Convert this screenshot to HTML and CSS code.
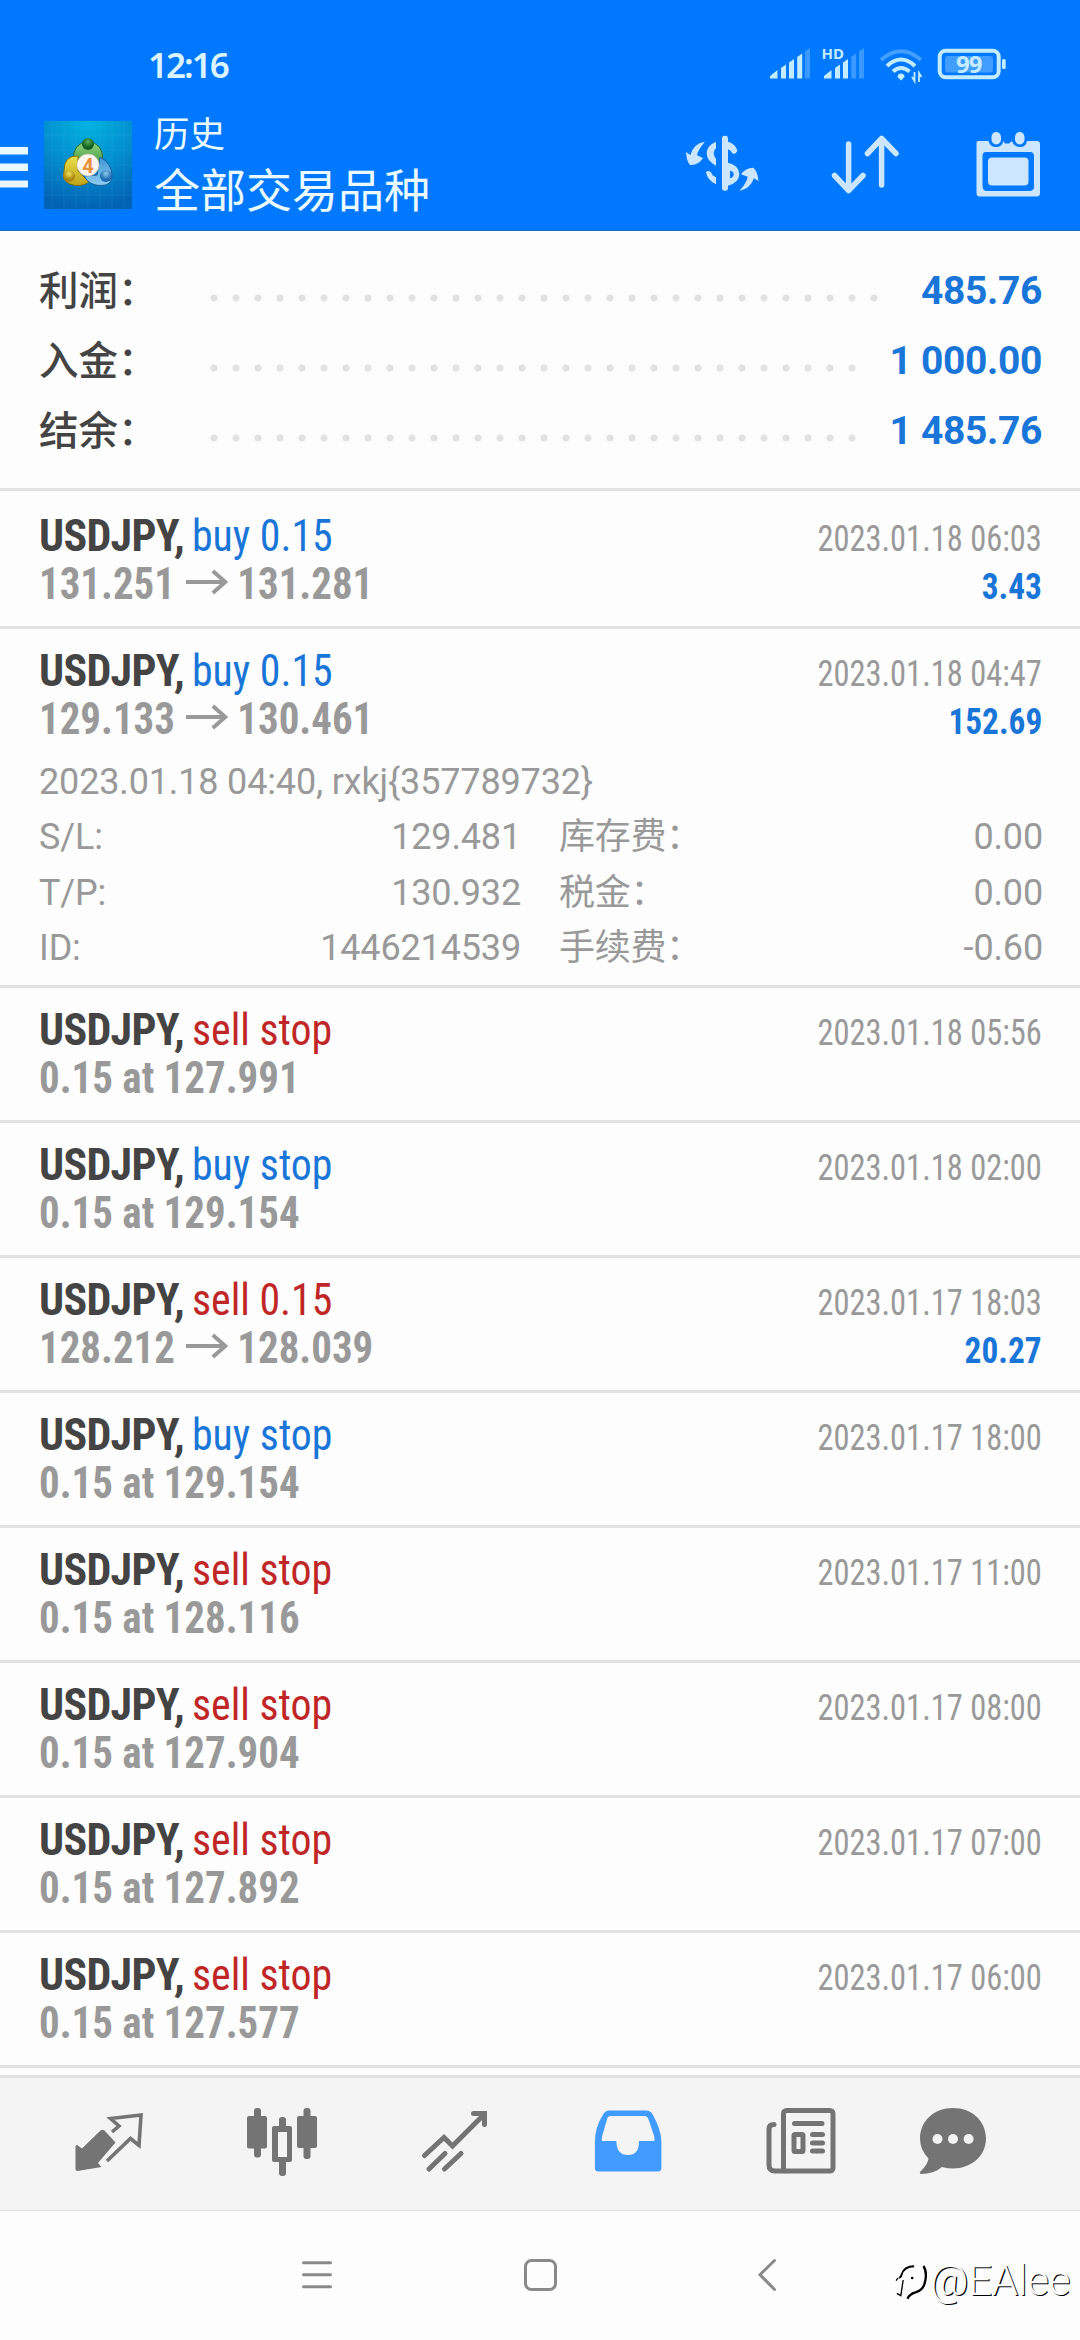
FILE: index.html
```html
<!DOCTYPE html>
<html lang="zh-CN">
<head>
<meta charset="utf-8">
<title>历史</title>
<link rel="stylesheet" href="styles.css">
</head>
<body>
<svg width="0" height="0" class="defs">
  <symbol id="arrow" viewBox="0 0 44 26" preserveAspectRatio="none"><path d="M1 13H41M28 2L40.500 13L28 24" fill="none" stroke="#999" stroke-width="4"/></symbol>
</svg>
<header class="header">
  <div class="status">
    <span class="clock">12:16</span>
    <svg class="status-icons" viewBox="766 40 244 48" width="244" height="48" fill="#c4ecff">
      <path d="M770 78.500V76L777.500 70V78.500ZM781 78.500V68L786 64.500V78.500ZM789 78.500V62.500L794 59V78.500ZM797.200 78.500V57L802.200 53.500V78.500Z"/>
      <path d="M805 78.500V51.500L810 48V78.500Z" opacity=".3"/>
      <path d="M824 78.500V76L831.500 70V78.500ZM835 78.500V68L840 64.500V78.500ZM843 78.500V62.500L848 59V78.500Z"/>
      <path d="M851.200 78.500V57L856.200 53.500V78.500ZM859 78.500V51.500L864 48V78.500Z" opacity=".3"/>
      <text x="821.500" y="59" class="hd">HD</text>
      <g fill="none" stroke="#c4ecff" stroke-width="4">
        <path d="M881 60Q901 42.500 921 60" opacity=".35"/>
        <path d="M887 66Q901 53 915 66"/>
        <path d="M893 71.500Q901 64.500 909.500 71.500"/>
        <rect x="939.700" y="50.700" width="59" height="26.600" rx="6"/>
      </g>
      <path d="M901 80.500L897.500 77Q897.500 73.500 901 73.500T904.500 77Z"/>
      <path d="M914.500 72V81L912 77M919 82V73L921.500 77" fill="none" stroke="#c4ecff" stroke-width="1.800"/>
      <rect x="945" y="56" width="48" height="16.500" rx="3" opacity=".33"/>
      <rect x="1002" y="59" width="3.700" height="10" rx="1.500"/>
      <text x="956" y="73" class="charge">99</text>
    </svg>
  </div>
  <div class="toolbar">
    <svg class="menu" viewBox="0 0 28 41" width="28" height="41" fill="#e8f8ff"><path d="M0 0h28v7.500H0ZM0 16.500h28v7.500H0ZM0 33.500h28v7H0Z"/></svg>
    <svg class="logo" viewBox="0 0 88 88" width="88" height="88">
      <defs>
        <radialGradient id="sky" cx=".5" cy="0" r="1"><stop offset="0" stop-color="#02b4e0"/><stop offset=".5" stop-color="#0390d0"/><stop offset="1" stop-color="#0262b4"/></radialGradient>
        <linearGradient id="gr" x2="0" y2="1"><stop offset="0" stop-color="#8fd37a"/><stop offset="1" stop-color="#2d8a38"/></linearGradient>
        <linearGradient id="ye" x2="0" y2="1"><stop offset="0" stop-color="#e8e04a"/><stop offset="1" stop-color="#bfa21a"/></linearGradient>
        <linearGradient id="bl" x2="0" y2="1"><stop offset="0" stop-color="#3d97d8"/><stop offset="1" stop-color="#8fcdf0"/></linearGradient>
        <radialGradient id="gb" cy=".3"><stop offset="0" stop-color="#5fae5a"/><stop offset="1" stop-color="#12601f"/></radialGradient>
        <radialGradient id="yb" cy=".3"><stop offset="0" stop-color="#f0e458"/><stop offset="1" stop-color="#a8860e"/></radialGradient>
        <radialGradient id="bb" cy=".3"><stop offset="0" stop-color="#8ccaf0"/><stop offset="1" stop-color="#1b6cb0"/></radialGradient>
      </defs>
      <rect width="88" height="88" fill="url(#sky)"/>
      <path d="M8 0V88M20 0V88M32 0V88M44 0V88M56 0V88M68 0V88M80 0V88M0 14H88M0 29H88M0 44H88M0 59H88M0 74H88" stroke="#4cc4ee" stroke-width=".7" opacity=".18"/>
      <path d="M29 40Q29 21 44 21T59 40L54 50H34Z" fill="url(#gr)" stroke="#226d35" stroke-width="1"/>
      <path d="M34 35Q20 34 20 50Q18 60 26 63Q36 67 45 61L34 50Z" fill="url(#ye)" stroke="#80700f" stroke-width="1"/>
      <path d="M56 36Q68 42 68 55Q68 64 58 64.500Q45 65 40 55L53 54Z" fill="url(#bl)" stroke="#195c9a" stroke-width="1"/>
      <circle cx="44" cy="23" r="6" fill="url(#gb)"/>
      <circle cx="25" cy="55" r="6" fill="url(#yb)"/>
      <circle cx="62" cy="55" r="6" fill="url(#bb)"/>
      <circle cx="44" cy="44" r="11" fill="#fbf5ef" stroke="#cfc3ae" stroke-width=".6"/>
      <text x="44" y="51.500" class="four">4</text>
    </svg>
    <div class="titles"><div class="title">历史</div><div class="subtitle">全部交易品种</div></div>
    <div class="actions">
      <svg class="dollar" viewBox="0 0 270 225" width="90" height="75" fill="#cce6ff">
        <rect x="126" y="32" width="18" height="165" rx="8"/>
        <path d="M108 50V70Q101 75 101 85Q101 94 108 101V122Q80 108 80 85Q80 62 108 50ZM78 142Q83 134 93 142Q96 152 108 157V178Q82 166 78 142ZM144 50Q166 56 172 76Q170 88 158 86Q154 77 144 73ZM144 113Q178 121 178 148Q178 173 144 182ZM150 137V160Q161 157 161 148T150 137Z" fill-rule="evenodd"/>
        <path d="M75 50Q53 75 51 91L69 99Q55 122 30 120Q19 107 18 81L31 90Q42 54 75 50Z"/>
        <path d="M178 198Q201 172 203 155L183 148Q198 127 220 128Q234 140 235 168L222 160Q210 192 178 198Z"/>
      </svg>
      <svg class="sort" viewBox="828 130 74 70" width="74" height="70" fill="none" stroke="#cce6ff" stroke-width="5.500" stroke-linecap="round" stroke-linejoin="round"><path d="M848.600 144V190M834.500 175.500L848.600 190.500L863 175.500M881.600 185V139M867.500 153.500L881.600 138.500L896 153.500"/></svg>
      <svg class="calendar" viewBox="974 130 68 70" width="68" height="70" fill="#cce6ff">
        <path fill-rule="evenodd" d="M978 141H988.500Q990 147 996 147T1003.500 141L1005 143.500H1009L1012 141Q1014 147 1020 147T1027 141H1037Q1040 141 1040 144V193Q1040 196.500 1037 196.500H979.500Q976.500 196.500 976.500 193V143Q976.500 141 978 141ZM986 152Q982.500 152 982.500 156V186Q982.500 191 987 191H1029Q1034 191 1034 187V156Q1034 152 1030 152Z"/>
        <rect x="988" y="157.500" width="40.500" height="28" rx="4"/><rect x="991.500" y="132" width="9.500" height="12.500" rx="4.700"/><rect x="1015" y="132" width="9.500" height="12.500" rx="4.700"/>
      </svg>
    </div>
  </div>
</header>
<main class="content">
  <section class="summary">
    <div class="sum-row"><span class="sum-label">利润：</span><span class="dots"></span><span class="sum-value">485.76</span></div>
    <div class="sum-row"><span class="sum-label">入金：</span><span class="dots"></span><span class="sum-value">1 000.00</span></div>
    <div class="sum-row"><span class="sum-label">结余：</span><span class="dots"></span><span class="sum-value">1 485.76</span></div>
  </section>
  <article class="deal">
    <div class="line"><div class="name"><b>USDJPY,</b> <span class="buy">buy 0.15</span></div><time>2023.01.18 06:03</time></div>
    <div class="line"><div class="price">131.251<svg class="arrow"><use href="#arrow"/></svg>131.281</div><div class="profit">3.43</div></div>
  </article>
  <article class="deal">
    <div class="line"><div class="name"><b>USDJPY,</b> <span class="buy">buy 0.15</span></div><time>2023.01.18 04:47</time></div>
    <div class="line"><div class="price">129.133<svg class="arrow"><use href="#arrow"/></svg>130.461</div><div class="profit">152.69</div></div>
    <div class="details">
      <div class="note">2023.01.18 04:40, rxkj{357789732}</div>
      <span>S/L:</span><span class="num">129.481</span><span class="cjk">库存费：</span><span class="num">0.00</span>
      <span>T/P:</span><span class="num">130.932</span><span class="cjk">税金：</span><span class="num">0.00</span>
      <span>ID:</span><span class="num">1446214539</span><span class="cjk">手续费：</span><span class="num">-0.60</span>
    </div>
  </article>
  <article class="deal">
    <div class="line"><div class="name"><b>USDJPY,</b> <span class="sell">sell stop</span></div><time>2023.01.18 05:56</time></div>
    <div class="line"><div class="price">0.15 at 127.991</div></div>
  </article>
  <article class="deal">
    <div class="line"><div class="name"><b>USDJPY,</b> <span class="buy">buy stop</span></div><time>2023.01.18 02:00</time></div>
    <div class="line"><div class="price">0.15 at 129.154</div></div>
  </article>
  <article class="deal">
    <div class="line"><div class="name"><b>USDJPY,</b> <span class="sell">sell 0.15</span></div><time>2023.01.17 18:03</time></div>
    <div class="line"><div class="price">128.212<svg class="arrow"><use href="#arrow"/></svg>128.039</div><div class="profit">20.27</div></div>
  </article>
  <article class="deal">
    <div class="line"><div class="name"><b>USDJPY,</b> <span class="buy">buy stop</span></div><time>2023.01.17 18:00</time></div>
    <div class="line"><div class="price">0.15 at 129.154</div></div>
  </article>
  <article class="deal">
    <div class="line"><div class="name"><b>USDJPY,</b> <span class="sell">sell stop</span></div><time>2023.01.17 11:00</time></div>
    <div class="line"><div class="price">0.15 at 128.116</div></div>
  </article>
  <article class="deal">
    <div class="line"><div class="name"><b>USDJPY,</b> <span class="sell">sell stop</span></div><time>2023.01.17 08:00</time></div>
    <div class="line"><div class="price">0.15 at 127.904</div></div>
  </article>
  <article class="deal">
    <div class="line"><div class="name"><b>USDJPY,</b> <span class="sell">sell stop</span></div><time>2023.01.17 07:00</time></div>
    <div class="line"><div class="price">0.15 at 127.892</div></div>
  </article>
  <article class="deal">
    <div class="line"><div class="name"><b>USDJPY,</b> <span class="sell">sell stop</span></div><time>2023.01.17 06:00</time></div>
    <div class="line"><div class="price">0.15 at 127.577</div></div>
  </article>
</main>
<nav class="tabs">
  <svg viewBox="68.500 2104 80 80" fill="#747474">
    <path d="M75 2146.500Q76 2144 78 2146L81.500 2148.500L100 2130.500Q102 2129 104 2130.500L115 2142.500L97.500 2163L101 2167L77 2171Q75 2171 75 2169Z"/>
    <path d="M111.500 2132L118.500 2126L110 2118.500L140.500 2115L138.500 2145.500L130 2138.500L106.500 2161" fill="none" stroke="#747474" stroke-width="3.600"/>
  </svg>
  <svg viewBox="241 2104 80 80" fill="#747474">
    <rect x="246" y="2116" width="20" height="32.500" rx="2"/><rect x="253" y="2108" width="7" height="49.500" rx="3"/>
    <rect x="296" y="2116" width="20" height="32" rx="2"/><rect x="302.500" y="2108" width="7" height="51" rx="3"/>
    <rect x="278" y="2117" width="7" height="13" rx="3"/><rect x="278" y="2158" width="7" height="18" rx="3"/>
    <path fill-rule="evenodd" d="M273 2126H289Q291 2126 291 2128V2160Q291 2162 289 2162H273Q271 2162 271 2160V2128Q271 2126 273 2126ZM277 2132V2157H286V2132Z"/>
  </svg>
  <svg viewBox="414.500 2104 80 80" fill="none" stroke="#747474" stroke-width="5" stroke-linecap="round"><path d="M424 2155.500L443.500 2137.500L452 2146L484 2114M473 2113.500H484V2124.500M428.500 2169L444.500 2153.500M444 2169L460.500 2153.500"/></svg>
  <svg viewBox="587.600 2104 80 80" fill="#429bff">
    <path fill-rule="evenodd" d="M609 2110.500H646Q650 2110.500 652 2114Q661 2130 661 2142V2168Q661 2171.500 657.500 2171.500H598Q594.500 2171.500 594.500 2168V2142Q594.500 2127 603 2114Q605 2110.500 609 2110.500ZM610 2116Q608 2116 607 2118L601.500 2137V2141H616Q616 2155 627.500 2155T638.500 2141H654V2137L648 2119Q647 2116 644 2116Z"/>
  </svg>
  <svg viewBox="761 2104 80 80" fill="none" stroke="#747474" stroke-width="5" stroke-linecap="round">
    <rect x="783.500" y="2110.500" width="49.500" height="60.500" rx="3"/><path d="M774 2124.500Q769 2124.500 769 2129V2165Q769 2171 775 2171H785" />
    <path d="M794.500 2123.500H822M812.500 2134.500H822.500M812.500 2143H822.500M812.500 2151H822.500"/><rect x="794" y="2134.500" width="9" height="17" rx="1"/>
  </svg>
  <svg viewBox="913 2104 80 80" fill="#747474">
    <path fill-rule="evenodd" d="M953 2108C972 2108 986 2121 986 2138.500S971 2168.500 953 2168.500Q948 2168.500 942 2167Q934 2174 921 2174Q918.500 2173 921 2171Q928 2164 928.500 2158.500Q920 2150 920 2138.500C920 2121 934 2108 953 2108Z"/>
    <circle cx="937.500" cy="2139" r="5" fill="#f4f4f4"/><circle cx="953" cy="2139" r="5" fill="#f4f4f4"/><circle cx="968.600" cy="2139" r="5" fill="#f4f4f4"/>
  </svg>
</nav>
<footer class="sysnav">
  <svg viewBox="297 2255 40 40" stroke="#8a8a8a" stroke-width="3" stroke-linecap="round"><path d="M303.500 2262.700H330.500M303.500 2274.700H330.500M303.500 2286.700H330.500"/></svg>
  <svg viewBox="520 2255 40 40" fill="none" stroke="#8a8a8a" stroke-width="3"><rect x="523.500" y="2260.500" width="30" height="29" rx="6"/></svg>
  <svg viewBox="747 2255 40 40" fill="none" stroke="#8a8a8a" stroke-width="3" stroke-linecap="round"><path d="M774.500 2260.500L760 2274.700L774.500 2289.500"/></svg>
</footer>
<div class="watermark">
  <svg viewBox="0 0 110 120" width="37" height="40" fill="none" stroke="#000" stroke-width="6">
    <path d="M26 52Q31 54 34 44Q42 19 72 19"/><path d="M18 62L23 54M39 60L32 107L20 100" stroke-width="4"/>
    <path d="M100 18Q112 36 104 68Q99 90 76 97Q58 102 52 116" stroke-width="7"/><circle cx="66" cy="54" r="4" fill="#000" stroke="none"/>
  </svg>
  <span>@EAlee</span>
</div>
</body>
</html>
```
FILE: styles.css
```css
* { box-sizing: border-box; }
body {
  margin: 0;
  width: 1080px;
  height: 2340px;
  display: flex;
  flex-direction: column;
  position: relative;
  overflow: hidden;
  background: #fdfdfd;
  color: #444;
  font-family: Roboto, "Noto Sans CJK SC", sans-serif;
}
svg { display: block; flex: none; }
.defs { position: absolute; }

.header { height: 231px; background: #0078ff; border-bottom: 1px solid #1c6cc4; }
.status { height: 88px; padding: 40px 70px 0 148px; display: flex; justify-content: space-between; }
.clock {
  font: 600 35px/49px "Noto Sans", sans-serif;
  letter-spacing: -2px;
  color: #dcf4ff;
}
.hd { font: 700 15px "Noto Sans", sans-serif; }
.charge { font: 700 24px "Noto Sans", sans-serif; letter-spacing: -1px; }
.toolbar { display: flex; height: 142px; }
.menu { margin-top: 58.500px; }
.logo { margin: 33px 0 0 16px; }
.four { font: 700 20px Roboto, sans-serif; fill: #e8903c; text-anchor: middle; }
.titles { margin: 18px 0 0 22px; color: #eafaff; font-family: "Noto Sans CJK SC", sans-serif; }
.title { font-size: 35.500px; line-height: 52px; }
.subtitle { font-size: 46px; line-height: 58px; }
.actions { display: flex; margin-left: auto; padding-right: 38px; }
.dollar { margin: 37px 58px 0 0; }
.sort { margin: 42px 72px 0 0; }
.calendar { margin-top: 42px; }

.content { height: 1844px; flex: none; }
.summary { height: 260px; padding: 24px 38px 0 39px; border-bottom: 3px solid #e2e2e2; }
.sum-row { height: 70px; display: flex; align-items: center; }
.sum-label { width: 163.500px; height: 70px; font: 500 39.500px/66px "Noto Sans CJK SC", sans-serif; }
.dots {
  flex: 1;
  height: 8px;
  margin: 15px 32px 0 0;
  background: radial-gradient(circle at 11px 4px, #e2e2e2 3.200px, transparent 3.900px) 0 0 / 22px 8px repeat-x;
}
.sum-value { padding-top: 1px; font-size: 39px; font-weight: 700; line-height: 70px; letter-spacing: -.35px; color: #1976d8; }

.deal { padding: 18px 38px 18px 39px; border-bottom: 3px solid #e2e2e2; font-family: "Roboto Condensed", sans-serif; }
.summary + .deal { padding-top: 21px; }
.line { display: flex; justify-content: space-between; align-items: baseline; height: 48px; line-height: 48px; }
.name { font-size: 44px; }
.name b { letter-spacing: -.7px; }
.name span { display: inline-block; margin-left: -2px; transform: scaleX(.95); transform-origin: left; }
.buy { color: #1976d8; }
.sell { color: #c02626; }
.price { font-size: 44px; font-weight: 700; color: #999; transform: scaleX(.93); transform-origin: left; }
.arrow { display: inline-block; width: 47px; height: 26px; margin: 0 9px 0 11px; vertical-align: 4px; }
time { font-size: 37px; color: #999; transform: scaleX(.877); transform-origin: right; }
.profit { font-size: 37px; font-weight: 700; color: #1976d8; transform: scaleX(.9); transform-origin: right; }
.details {
  display: grid;
  grid-template-columns: 120px 362px 150px 1fr;
  margin: 11.500px -1px -10px 0;
  font: 36px/55.600px Roboto, "Noto Sans CJK SC", sans-serif;
  letter-spacing: -.150px;
  color: #999;
}
.note { grid-column: 1 / -1; }
.num { text-align: right; }
.cjk { padding-left: 38px; letter-spacing: -.3px; white-space: nowrap; }

.tabs {
  height: 136px;
  flex: none;
  padding: 0 87px 0 68.500px;
  display: flex;
  align-items: center;
  justify-content: space-between;
  background: #f4f4f4;
  border-top: 3px solid #e2e2e2;
  border-bottom: 1px solid #e2e2e2;
}
.tabs svg { width: 80px; height: 80px; }
.tabs svg:nth-child(-n+5) { margin-right: 13px; }
.tabs svg:nth-child(6) { margin-left: -21px; }
.sysnav { display: flex; height: 129px; padding: 44px 293px 0 297px; justify-content: space-between; }
.sysnav svg { width: 40px; height: 40px; }
.watermark {
  position: absolute;
  left: 890px;
  top: 2256px;
  display: flex;
  color: #fdfdfd;
}
.watermark svg { margin-top: 4px; }
.watermark span {
  margin-left: 3px;
  font: 300 42px/49px Roboto, sans-serif;
  letter-spacing: -.2px;
  text-shadow: 1.200px 1.200px 0 #000;
}
```
